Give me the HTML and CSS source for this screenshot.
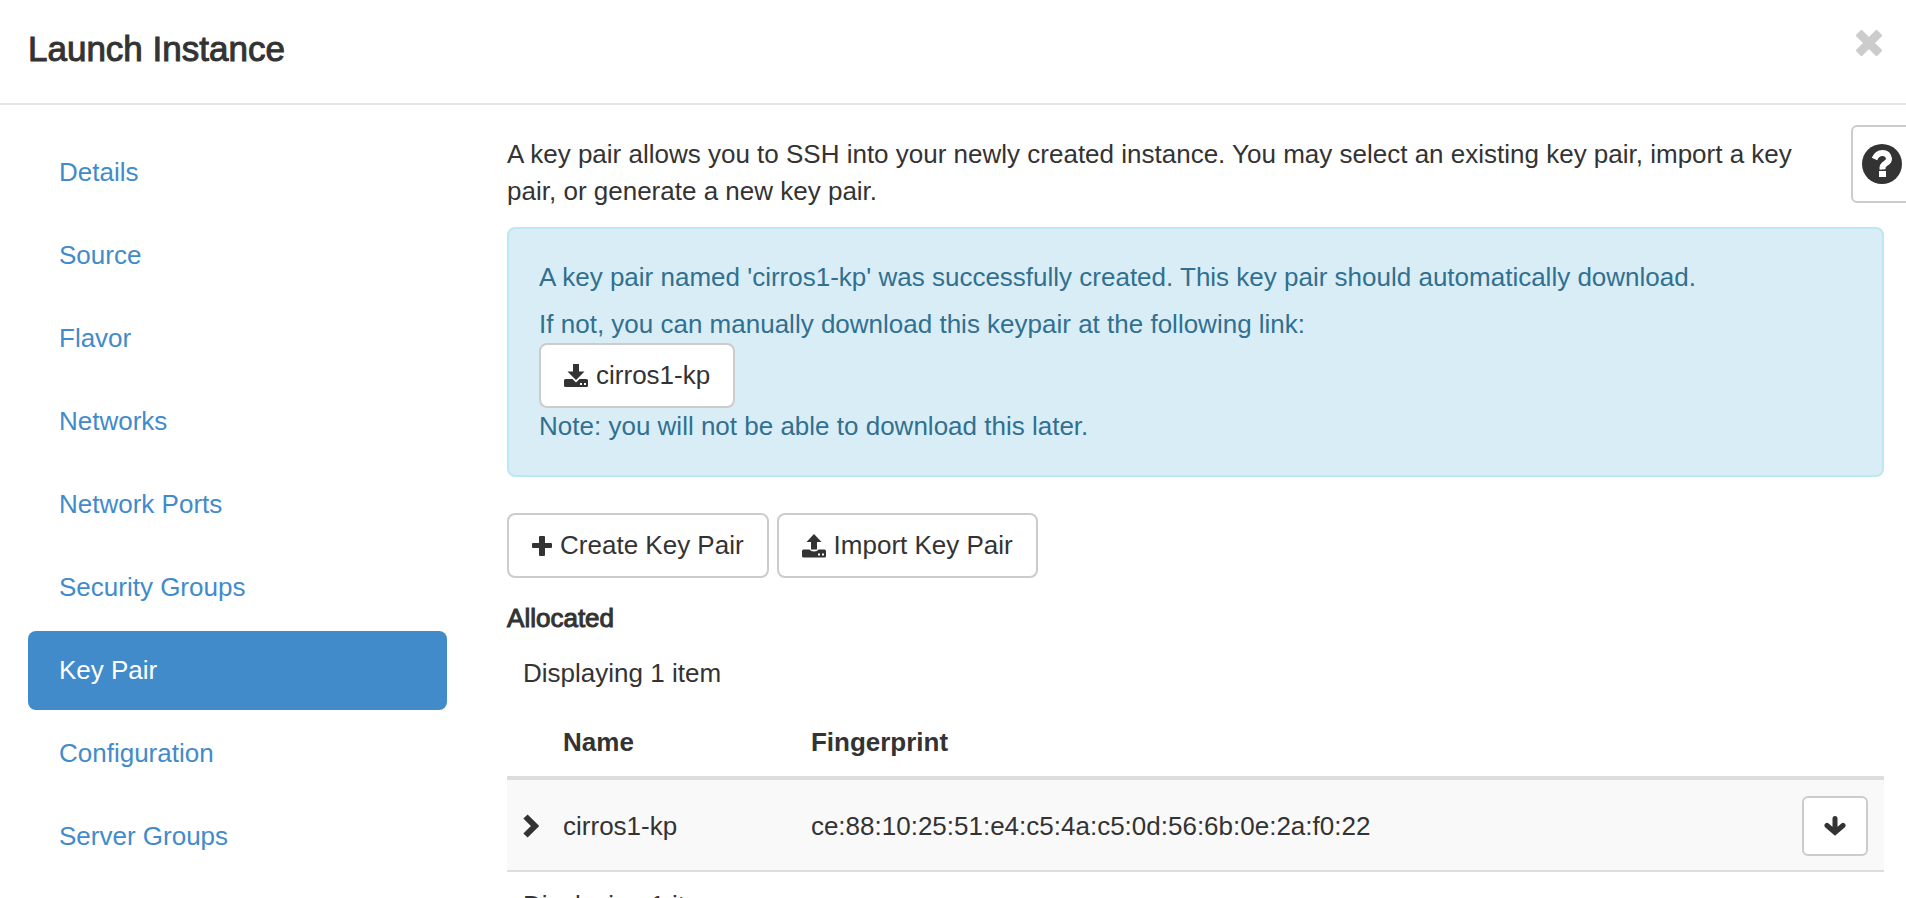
FILE: index.html
```html
<!DOCTYPE html>
<html lang="en">
<head>
<meta charset="utf-8">
<meta name="viewport" content="width=device-width, initial-scale=1">
<title>Launch Instance</title>
<link rel="stylesheet" href="styles.css">
</head>
<body>
<header class="modal-header">
  <h1 class="modal-title">Launch Instance</h1>
  <button class="close" type="button" aria-label="Close">
    <svg class="close-icon" viewBox="0 0 26 26" aria-hidden="true"><path fill="currentColor" stroke="currentColor" stroke-width="3" stroke-linejoin="round" d="M5.500 1.500L13 9 20.500 1.500 24.500 5.500 17 13 24.500 20.500 20.500 24.500 13 17 5.500 24.500 1.500 20.500 9 13 1.500 5.500z"/></svg>
  </button>
</header>
<main class="modal-body">
  <nav class="steps">
    <a class="step" href="#details">Details</a>
    <a class="step" href="#source">Source</a>
    <a class="step" href="#flavor">Flavor</a>
    <a class="step" href="#networks">Networks</a>
    <a class="step" href="#ports">Network Ports</a>
    <a class="step" href="#security">Security Groups</a>
    <a class="step active" href="#keypair" aria-current="step">Key Pair</a>
    <a class="step" href="#configuration">Configuration</a>
    <a class="step" href="#servergroups">Server Groups</a>
  </nav>
  <section class="content">
    <p class="intro">A key pair allows you to SSH into your newly created instance. You may select an existing key pair, import a key pair, or generate a new key pair.</p>
    <div class="alert" role="status">
      <p class="alert-lead">A key pair named 'cirros1-kp' was successfully created. This key pair should automatically download.</p>
      <p>If not, you can manually download this keypair at the following link:</p>
      <button class="btn" type="button"><svg class="icon" viewBox="0 0 24 24" aria-hidden="true"><path fill="currentColor" d="M9 0h6v7.500h5.500L12 16 3.500 7.500H9z"/><path fill="currentColor" fill-rule="evenodd" d="M1.500 15H8.500L12 18.500 15.500 15h7q1.500 0 1.500 1.500v5q0 1.500-1.500 1.500h-21Q0 23 0 21.500v-5Q0 15 1.500 15zM16 19v2h2v-2zM20 19v2h2v-2z"/></svg>cirros1-kp</button>
      <p>Note: you will not be able to download this later.</p>
    </div>
    <div class="actions">
      <button class="btn" type="button"><svg class="icon-plus" viewBox="0 0 20 20" aria-hidden="true"><path fill="currentColor" d="M8 0h4q1 0 1 1v6h6q1 0 1 1v3q0 1-1 1h-6v7q0 1-1 1H8q-1 0-1-1v-7H1q-1 0-1-1V8q0-1 1-1h6V1q0-1 1-1z"/></svg>Create Key Pair</button>
      <button class="btn" type="button"><svg class="icon" viewBox="0 0 24 24" aria-hidden="true"><path fill="currentColor" d="M12 0l7.500 8H15V15.500H9V8H4.500z"/><path fill="currentColor" fill-rule="evenodd" d="M1.500 15.500H7.500q1 2 4.500 2t4.500-2h6q1.500 0 1.500 1.500v5q0 1.500-1.500 1.500h-21Q0 23.500 0 22v-5Q0 15.500 1.500 15.500zM16 19.500v2h2v-2zM20 19.500v2h2v-2z"/></svg>Import Key Pair</button>
    </div>
    <h2 class="section-title">Allocated</h2>
    <p class="count">Displaying 1 item</p>
    <table class="table">
      <thead>
        <tr><th class="col-expand"></th><th class="col-name" scope="col">Name</th><th scope="col">Fingerprint</th><th class="col-action"></th></tr>
      </thead>
      <tbody>
        <tr>
          <td class="col-expand"><button class="expand" type="button" aria-label="Show details"><svg class="chevron" viewBox="0 0 16 24" aria-hidden="true"><path fill="none" stroke="currentColor" stroke-width="6" d="M2.500 2.500L12 12 2.500 21.500"/></svg></button></td>
          <td>cirros1-kp</td>
          <td>ce:88:10:25:51:e4:c5:4a:c5:0d:56:6b:0e:2a:f0:22</td>
          <td class="col-action"><button class="btn-move" type="button" aria-label="Deallocate"><svg class="arrow" viewBox="0 0 22 20" aria-hidden="true"><path fill="none" stroke="currentColor" stroke-width="5" stroke-linecap="round" d="M11 2.500V14M3 9.500L11 16.500 19 9.500"/></svg></button></td>
        </tr>
      </tbody>
    </table>
    <p class="count count-bottom">Displaying 1 item</p>
  </section>
  <button class="help" type="button" aria-label="Help">
    <svg class="help-icon" viewBox="0 0 40 40" aria-hidden="true"><circle cx="20" cy="20" r="20" fill="currentColor"/><path fill="none" stroke="#fff" stroke-width="6" d="M12.500 15Q15 9 20.500 9T27 14.500Q27 17.500 23.500 19.500T20.500 25.500"/><path fill="#fff" d="M17 27h7v6h-7z"/></svg>
  </button>
</main>
</body>
</html>
```
FILE: styles.css
```css
* { box-sizing: border-box; }
html { overflow: hidden; }
body {
  margin: 0;
  height: 100vh;
  overflow: hidden;
  background: #fff;
  color: #333;
  font: 26px/37px "Liberation Sans", Arial, sans-serif;
}
h1, h2, p { margin: 0; }
button {
  margin: 0;
  padding: 0;
  border: 0;
  background: none;
  color: inherit;
  font: inherit;
  cursor: pointer;
}
svg { display: block; }

.modal-header {
  display: flex;
  align-items: flex-start;
  justify-content: space-between;
  padding: 27px 24px 33px 28px;
  border-bottom: 2px solid #e5e5e5;
}
.modal-title {
  font-size: 35px;
  line-height: 43px;
  font-weight: 400;
  -webkit-text-stroke: 1px currentColor;
}
.close { padding-top: 3px; color: #ccc; }
.close-icon { width: 26px; height: 26px; }

.modal-body {
  position: relative;
  display: grid;
  grid-template-columns: 7fr 23fr;
  column-gap: 60px;
  padding: 28px 22px 0 28px;
}
.steps {
  display: flex;
  flex-direction: column;
  gap: 4px;
}
.step {
  padding: 21px 31px;
  border-radius: 8px;
  color: #428bca;
  text-decoration: none;
}
.step.active { background: #428bca; color: #fff; }

.content { padding-top: 3px; }
.intro { padding: 0 60px 17px 0; }
.alert {
  padding: 30px;
  border: 2px solid #bce8f1;
  border-radius: 8px;
  background: #d9edf7;
  color: #31708f;
}
.alert-lead { margin-bottom: 10px; }
.btn {
  display: flex;
  align-items: center;
  gap: 8px;
  padding: 12px 23px;
  border: 2px solid #ccc;
  border-radius: 8px;
  background: #fff;
  color: #333;
}
.icon { width: 24px; height: 24px; }
.icon-plus { width: 20px; height: 20px; }
.actions {
  display: flex;
  gap: 8px;
  margin: 36px 0 22px;
}
.section-title {
  font-size: 26px;
  line-height: 37px;
  font-weight: 400;
  -webkit-text-stroke: 1px currentColor;
}
.count { padding: 18px 16px 16px; }
.count-bottom { padding-top: 15px; }

.table {
  width: 100%;
  border-collapse: separate;
  border-spacing: 0;
}
.table th, .table td {
  padding: 16px 16px 15px;
  text-align: left;
}
.table th { border-bottom: 4px solid #ddd; }
.table td {
  padding-bottom: 14px;
  border-bottom: 2px solid #ddd;
  background: #f9f9f9;
}
.table .col-expand { width: 40px; padding-right: 8px; }
.table .col-name { width: 18%; }
.table .col-action { width: 98px; }
.expand { display: block; }
.chevron { width: 16px; height: 24px; }
.btn-move {
  display: flex;
  align-items: center;
  justify-content: center;
  width: 66px;
  height: 60px;
  border: 2px solid #ccc;
  border-radius: 6px;
  background: #fff;
}
.arrow { width: 22px; height: 20px; }

.help {
  position: absolute;
  top: 20px;
  right: -7px;
  padding: 17px 9px;
  border: 2px solid #ccc;
  border-radius: 6px;
  background: #fff;
}
.help-icon { width: 40px; height: 40px; }
```
